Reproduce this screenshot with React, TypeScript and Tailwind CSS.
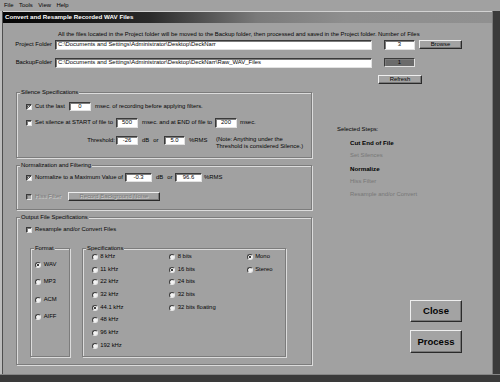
import type { ReactNode } from "react";

const sunken =
  "border border-t-[#3a3a3a] border-l-[#3a3a3a] border-r-[#e2e2e2] border-b-[#e2e2e2] shadow-[inset_1px_1px_0_#7c7c7c]";
const raised =
  "border border-t-[#eeeeee] border-l-[#eeeeee] border-r-[#2a2a2a] border-b-[#2a2a2a] shadow-[inset_-1px_-1px_0_#787878]";
const etched = "border border-[#7c7c7c] shadow-[inset_1px_1px_0_#dcdcdc,1px_1px_0_#dcdcdc]";
const disabledText = "text-[#7a7a7a] [text-shadow:0.7px_0.7px_0_#d4d4d4]";

const Field = ({ value, className = "", left = false }: { value: string; className?: string; left?: boolean }) => (
  <div
    className={`${sunken} bg-white h-full flex items-center shrink-0 ${left ? "pl-[2px] justify-start" : "justify-center"} ${className}`}
  >
    {value}
  </div>
);

const Check = ({ checked = false, disabled = false }: { checked?: boolean; disabled?: boolean }) => (
  <span
    className={`${sunken} w-[6px] h-[6px] shrink-0 flex items-center justify-center ${disabled ? "bg-[#a6a6a6]" : "bg-white"}`}
  >
    {checked && (
      <svg viewBox="0 0 6 6" className="w-[5px] h-[5px]">
        <path d="M0.8 2.8 L2.3 4.4 L5.2 1.2" stroke="#000" strokeWidth="1.2" fill="none" />
      </svg>
    )}
  </span>
);

const Radio = ({ checked = false }: { checked?: boolean }) => (
  <span className="w-[6px] h-[6px] shrink-0 rounded-full bg-[#f4f4f4] border border-t-[#3c3c3c] border-l-[#3c3c3c] border-r-[#e6e6e6] border-b-[#e6e6e6] flex items-center justify-center">
    {checked && <span className="w-[2px] h-[2px] rounded-full bg-black" />}
  </span>
);

const Btn = ({ label, className = "", disabled = false }: { label: string; className?: string; disabled?: boolean }) => (
  <div className={`${raised} bg-[#a3a3a3] flex items-center justify-center shrink-0 ${disabled ? disabledText : ""} ${className}`}>
    {label}
  </div>
);

const Group = ({ title, className, children }: { title: string; className: string; children: ReactNode }) => (
  <fieldset className={`${etched} shrink-0 ${className}`}>
    <legend className="ml-[3px] px-[1px] h-[6px] leading-[6px] bg-[#a1a1a1]">{title}</legend>
    {children}
  </fieldset>
);

const Opt = ({ label, checked = false, gap = "ml-[2.5px]" }: { label: string; checked?: boolean; gap?: string }) => (
  <div className="h-[6px] flex items-center">
    <Radio checked={checked} />
    <span className={gap}>{label}</span>
  </div>
);

const steps = [
  { label: "Cut End of File", on: true },
  { label: "Set Silences", on: false },
  { label: "Normalize", on: true },
  { label: "Hiss Filter", on: false },
  { label: "Resample and/or Convert", on: false },
];

const App = () => {
  return (
    <div className="w-[500px] h-[382px] overflow-hidden bg-[#a1a1a1] text-[#050505] text-[5.9px] leading-none font-['Liberation_Sans',Arial,sans-serif] flex flex-col">
      {/* menu bar */}
      <div className="h-[11px] shrink-0 flex items-center gap-[5.5px] pl-[4px]">
        <span>File</span>
        <span>Tools</span>
        <span>View</span>
        <span>Help</span>
      </div>

      <div className="flex-1 flex min-h-0">
        <div className="w-[3px] shrink-0 border-l-2 border-l-[#bdbdbd] bg-[#4e4e4e]" />

        <div className="flex-1 flex flex-col border-t border-t-[#d2d2d2]">
          {/* title bar */}
          <div className="h-[11px] shrink-0 flex items-center pl-[2px] bg-[linear-gradient(to_right,#040404_0%,#2a2a2a_30%,#7a7a7a_52%,#8e8e8e_70%,#909090_100%)]">
            <span className="text-white font-bold text-[6.2px]">Convert and Resample Recorded WAV Files</span>
          </div>

          {/* client */}
          <div className="flex-1 flex flex-col">
            <div className="mt-[9px] h-[6px] flex items-center">
              <span className="ml-[55px] w-[320px] shrink-0">
                All the files located in the Project folder will be moved to the Backup folder, then processed and saved in the Project folder.
              </span>
              <span>Number of Files</span>
            </div>

            <div className="mt-[2px] h-[10px] flex">
              <span className="w-[49px] shrink-0 text-right self-center">Project Folder</span>
              <Field left value="C:\Documents and Settings\Administrator\Desktop\DeckNarr" className="ml-[3px] w-[317px]" />
              <Field value="3" className="ml-[12px] w-[31px]" />
              <Btn label="Browse" className="ml-[4px] w-[43px] h-[9px]" />
            </div>

            <div className="mt-[8px] h-[10px] flex">
              <span className="w-[49px] shrink-0 text-right self-center">BackupFolder</span>
              <Field
                left
                value="C:\Documents and Settings\Administrator\Desktop\DeckNarr\Raw_WAV_Files"
                className="ml-[3px] w-[317px]"
              />
              <div className={`${sunken} ml-[12px] w-[31px] h-[9px] bg-[#6b6b6b] flex items-center justify-center`}>1</div>
            </div>

            <div className="mt-[7px] h-[9px] flex">
              <Btn label="Refresh" className="ml-[375px] w-[44px] h-full" />
            </div>

            <div className="flex-1 flex">
              {/* left column */}
              <div className="ml-[13px] w-[296px] shrink-0 flex flex-col">
                <Group title="Silence Specifications" className="mt-[5px] h-[69px]">
                  <div className="mt-[7px] h-[9px] flex items-center">
                    <span className="ml-[9px]">
                      <Check checked />
                    </span>
                    <span className="ml-[3px] w-[34px] shrink-0">Cut the last</span>
                    <Field value="0" className="w-[22px]" />
                    <span className="ml-[4px]">msec. of recording before applying filters.</span>
                  </div>

                  <div className="mt-[7px] h-[10px] flex items-center">
                    <span className="ml-[9px]">
                      <Check />
                    </span>
                    <span className="ml-[3px] w-[81px] shrink-0">Set silence at START of file to</span>
                    <Field value="500" className="w-[22px]" />
                    <span className="ml-[4px] w-[73px] shrink-0">msec. and at END of file to</span>
                    <Field value="200" className="w-[22px]" />
                    <span className="ml-[3px]">msec.</span>
                  </div>

                  <div className="mt-[8px] h-[9px] flex items-center">
                    <span className="w-[98px] shrink-0 text-right">Threshold:</span>
                    <Field value="-26" className="ml-[1px] w-[22px]" />
                    <span className="ml-[4px] w-[22px] shrink-0 flex gap-[4px]">
                      <span>dB</span>
                      <span>or</span>
                    </span>
                    <Field value="5.0" className="w-[21px]" />
                    <span className="ml-[4px] w-[27px] shrink-0">%RMS</span>
                    <span className="self-start leading-[6.5px]">
                      (Note: Anything under the
                      <br />
                      Threshold is considered Silence.)
                    </span>
                  </div>
                </Group>

                <Group title="Normalization and Filtering" className="mt-[4px] h-[48px]">
                  <div className="mt-[5px] h-[9px] flex items-center">
                    <span className="ml-[9px]">
                      <Check checked />
                    </span>
                    <span className="ml-[3px] w-[90px] shrink-0">Normalize to a Maximum Value of</span>
                    <Field value="-0.3" className="w-[27px]" />
                    <span className="ml-[4px] w-[19px] shrink-0 flex gap-[4px]">
                      <span>dB</span>
                      <span>or</span>
                    </span>
                    <Field value="96.6" className="w-[27px]" />
                    <span className="ml-[2px]">%RMS</span>
                  </div>

                  <div className="mt-[10px] h-[9px] flex items-center">
                    <span className="ml-[9px]">
                      <Check disabled />
                    </span>
                    <span className={`ml-[3px] w-[33px] shrink-0 ${disabledText}`}>Hiss Filter</span>
                    <Btn disabled label="Record Background Noise" className="w-[92px] h-full" />
                  </div>
                </Group>

                <Group title="Output File Specifications" className="mt-[4px] h-[151px]">
                  <div className="mt-[7px] h-[6px] flex items-center">
                    <span className="ml-[9px]">
                      <Check />
                    </span>
                    <span className="ml-[3px]">Resample and/or Convert Files</span>
                  </div>

                  <div className="mt-[12px] flex">
                    <Group title="Format" className="ml-[13px] w-[40px] h-[112px]">
                      <div className="mt-[11px] pl-[4px] flex flex-col gap-[11.4px]">
                        <Opt label="WAV" checked gap="ml-[2.7px]" />
                        <Opt label="MP3" gap="ml-[2.7px]" />
                        <Opt label="ACM" gap="ml-[2.7px]" />
                        <Opt label="AIFF" gap="ml-[2.7px]" />
                      </div>
                    </Group>

                    <Group title="Specifications" className="ml-[12px] w-[204px] h-[112px]">
                      <div className="mt-[3px] ml-[8.7px] flex">
                        <div className="w-[77.5px] shrink-0 flex flex-col gap-[6.7px]">
                          <Opt label="8 kHz" />
                          <Opt label="11 kHz" />
                          <Opt label="22 kHz" />
                          <Opt label="32 kHz" />
                          <Opt label="44.1 kHz" checked />
                          <Opt label="48 kHz" />
                          <Opt label="96 kHz" />
                          <Opt label="192 kHz" />
                        </div>
                        <div className="w-[77.5px] shrink-0 flex flex-col gap-[6.7px]">
                          <Opt label="8 bits" />
                          <Opt label="16 bits" checked />
                          <Opt label="24 bits" />
                          <Opt label="32 bits" />
                          <Opt label="32 bits floating" />
                        </div>
                        <div className="flex flex-col gap-[6.7px]">
                          <Opt label="Mono" checked />
                          <Opt label="Stereo" />
                        </div>
                      </div>
                    </Group>
                  </div>
                </Group>
              </div>

              {/* right column */}
              <div className="flex-1 flex flex-col">
                <div className="mt-[39.5px] ml-[25px] h-[13px] flex items-center">Selected Steps:</div>
                {steps.map((s) => (
                  <div
                    key={s.label}
                    className={`ml-[38px] h-[12.9px] flex items-center ${s.on ? "font-bold text-[6.2px] text-black" : "text-[#777777]"}`}
                  >
                    {s.label}
                  </div>
                ))}
                <Btn label="Close" className="mt-[99px] ml-[98px] w-[52px] h-[22px] font-bold text-[9.5px]" />
                <Btn label="Process" className="mt-[8px] ml-[98px] w-[52px] h-[23px] font-bold text-[9.5px]" />
              </div>
            </div>
          </div>
        </div>

        <div className="w-[8px] shrink-0 border-l border-l-[#7a7a7a] bg-[#3a3a3a]" />
      </div>

      <div className="h-[8px] shrink-0 border-t border-t-[#858585] bg-[#3a3a3a]" />
    </div>
  );
};

export default App;
